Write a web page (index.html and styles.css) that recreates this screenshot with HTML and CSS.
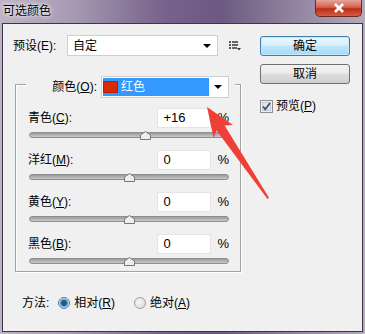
FILE: index.html
```html
<!DOCTYPE html>
<html lang="zh-CN">
<head>
  <meta charset="UTF-8">
  <title>可选颜色</title>
  <link rel="stylesheet" href="styles.css">
</head>
<body>
  <div class="window">
    <div class="titlebar">
      <span class="title">可选颜色</span>
      <div class="close">
        <svg width="14" height="10" viewBox="0 0 14 10"><path d="M3 1 L11 9 M11 1 L3 9" stroke="#fff" stroke-width="2.6"/></svg>
      </div>
    </div>

    <div class="client">
      <div class="main">
        <div class="preset-row">
          <label class="preset-label">预设(E):</label>
          <div class="select preset-select"><span>自定</span><span class="caret"></span></div>
          <svg class="list-icon" width="12" height="10" viewBox="0 0 12 10">
            <rect x="0" y="0" width="2" height="2" fill="#555"/>
            <rect x="3" y="0" width="6" height="2" fill="#666"/>
            <rect x="0" y="3" width="2" height="2" fill="#555"/>
            <rect x="3" y="3" width="6" height="2" fill="#666"/>
            <rect x="0" y="6" width="2" height="2" fill="#555"/>
            <rect x="3" y="6" width="5" height="2" fill="#666"/>
            <path d="M8 7 L12 7 L10 9.5 Z" fill="#333"/>
          </svg>
        </div>

        <div class="group">
          <div class="legend">
            <label>颜色(<u>O</u>):</label>
            <div class="select color-select">
              <div class="color-value"><span class="swatch"></span>红色</div>
              <div class="caret-box"><span class="caret"></span></div>
            </div>
          </div>

          <div class="channel">
            <div class="row"><label>青色(<u>C</u>):</label><div class="num">+16</div><span class="pct">%</span></div>
            <div class="slider"><div class="track"></div><svg class="thumb" style="left:58%" width="11" height="9" viewBox="0 0 11 9"><path d="M5.5 0.5 L10.5 4 L10.5 8.5 L0.5 8.5 L0.5 4 Z" fill="#eee" stroke="#777"/></svg></div>
          </div>
          <div class="channel">
            <div class="row"><label>洋红(<u>M</u>):</label><div class="num">0</div><span class="pct">%</span></div>
            <div class="slider"><div class="track"></div><svg class="thumb" style="left:50%" width="11" height="9" viewBox="0 0 11 9"><path d="M5.5 0.5 L10.5 4 L10.5 8.5 L0.5 8.5 L0.5 4 Z" fill="#eee" stroke="#777"/></svg></div>
          </div>
          <div class="channel">
            <div class="row"><label>黄色(<u>Y</u>):</label><div class="num">0</div><span class="pct">%</span></div>
            <div class="slider"><div class="track"></div><svg class="thumb" style="left:50%" width="11" height="9" viewBox="0 0 11 9"><path d="M5.5 0.5 L10.5 4 L10.5 8.5 L0.5 8.5 L0.5 4 Z" fill="#eee" stroke="#777"/></svg></div>
          </div>
          <div class="channel">
            <div class="row"><label>黑色(<u>B</u>):</label><div class="num">0</div><span class="pct">%</span></div>
            <div class="slider"><div class="track"></div><svg class="thumb" style="left:50%" width="11" height="9" viewBox="0 0 11 9"><path d="M5.5 0.5 L10.5 4 L10.5 8.5 L0.5 8.5 L0.5 4 Z" fill="#eee" stroke="#777"/></svg></div>
          </div>
        </div>

        <div class="method">
          <span>方法:</span>
          <label class="radio first"><span class="dot on"></span><span>相对(<u>R</u>)</span></label>
          <label class="radio"><span class="dot"></span><span>绝对(<u>A</u>)</span></label>
        </div>
      </div>

      <div class="side">
        <button class="btn default">确定</button>
        <button class="btn">取消</button>
        <label class="check">
          <svg width="13" height="13" viewBox="0 0 13 13">
            <rect x="0.5" y="0.5" width="12" height="12" fill="#e9eef3" stroke="#8e8f8f"/>
            <rect x="2.5" y="2.5" width="8" height="8" fill="#dfe6ee" stroke="#c4ccd6"/>
            <path d="M3 6.5 L5.3 9.3 L10 3" fill="none" stroke="#3b4f6e" stroke-width="1.7"/>
          </svg>
          <span>预览(<u>P</u>)</span>
        </label>
      </div>
    </div>

    <svg class="arrow" width="365" height="334" viewBox="0 0 365 334">
      <polygon points="207,107 233,125 224.6,125.5 269,197.8 267.5,199 216.6,130.6 213.6,138" fill="#ee4036"/>
    </svg>
  </div>
</body>
</html>
```

FILE: styles.css
```css
body {
  margin: 0;
  width: 365px;
  height: 334px;
  overflow: hidden;
  background: linear-gradient(90deg, #bdb4c5 0%, #a799b2 20%, #76628a 45%, #6c5880 60%, #8d7e9b 78%, #b3aabd 100%);
  font: 12px/16px "Liberation Sans", "Noto Sans CJK SC", sans-serif;
  color: #000;
}

.window {
  position: relative;
  height: 334px;
  display: flex;
  flex-direction: column;
}

.titlebar {
  height: 23px;
  display: flex;
  align-items: flex-start;
}

.title {
  padding: 4px 0 0 3px;
  line-height: 15px;
  text-shadow: 0 0 6px #fff, 0 0 3px #fff;
}

.close {
  margin-left: auto;
  margin-right: 3px;
  width: 47px;
  height: 17px;
  box-sizing: border-box;
  border: 1px solid #6d2a25;
  border-top: none;
  border-radius: 0 0 5px 5px;
  background: linear-gradient(#e6a597, #d0624f 45%, #bd2c17 55%, #d45c3f);
  display: flex;
  align-items: center;
  justify-content: center;
}

.client {
  flex: 1;
  margin: 0 2px 2px 2px;
  border: 1px solid #3e3646;
  background: #f0f0f0;
  display: flex;
}

.main {
  width: 242px;
}

.side {
  width: 90px;
  padding: 12px 0 0 15px;
  display: flex;
  flex-direction: column;
}

/* preset row */
.preset-row {
  display: flex;
  align-items: center;
  height: 21px;
  margin-top: 11px;
  padding-left: 10px;
}

.preset-label {
  width: 54px;
}

.select {
  box-sizing: border-box;
  background: #fff;
  border: 1px solid #cfcfcf;
  display: flex;
  align-items: center;
}

.preset-select {
  width: 151px;
  height: 21px;
  padding: 0 6px 0 5px;
  justify-content: space-between;
}

.caret {
  width: 0;
  height: 0;
  border-left: 4px solid transparent;
  border-right: 4px solid transparent;
  border-top: 4px solid #000;
}

.list-icon {
  margin-left: 11px;
}

/* group box */
.group {
  margin: 28px 0 0 12px;
  width: 226px;
  box-sizing: border-box;
  border: 1px solid #a3a3a3;
  padding-bottom: 5px;
  box-shadow: 1px 1px 0 #fff, inset 1px 1px 0 #fff;
}

.legend {
  margin: -9px 0 0 10px;
  width: 209px;
  height: 22px;
  box-sizing: border-box;
  padding-right: 6px;
  background: #f0f0f0;
  display: flex;
  align-items: center;
  justify-content: flex-end;
  gap: 4px;
}

.color-select {
  width: 128px;
  height: 22px;
  padding: 1px;
  align-items: stretch;
}

.color-value {
  flex: 1;
  background: #3399ff;
  color: #fff;
  display: flex;
  align-items: center;
}

.swatch {
  width: 13px;
  height: 10px;
  margin: 0 4px 0 1px;
  background: #d92a04;
  box-shadow: 0 0 0 1px #b02000;
}

.caret-box {
  width: 18px;
  display: flex;
  align-items: center;
  justify-content: center;
}

.channel {
  margin-top: 10px;
}

.row {
  display: flex;
  align-items: center;
  height: 20px;
  padding: 0 11px 0 12px;
}

.num {
  margin-left: auto;
  width: 54px;
  height: 20px;
  box-sizing: border-box;
  padding-left: 5px;
  background: #fff;
  border: 1px solid #e4e4e4;
  line-height: 18px;
  font-size: 13px;
}

.pct {
  margin-left: 6px;
  font-size: 13px;
}

.slider {
  position: relative;
  margin-left: 13px;
  width: 200px;
  height: 12px;
}

.track {
  position: relative;
  top: 4px;
  height: 4px;
  border-radius: 3px;
  border: 1px solid #8e8e8e;
  background: linear-gradient(#9a9a9a, #c8c8c8);
}

.thumb {
  position: absolute;
  top: 3px;
  margin-left: -5px;
}

/* method row */
.method {
  display: flex;
  align-items: center;
  height: 20px;
  margin-top: 21px;
  padding-left: 19px;
}

.radio {
  display: flex;
  align-items: center;
  gap: 4px;
  margin-left: 19px;
}

.radio.first {
  margin-left: 9px;
}

.dot {
  width: 12px;
  height: 12px;
  box-sizing: border-box;
  border-radius: 50%;
  border: 1px solid #a0a0a0;
  background: radial-gradient(circle at 40% 40%, #f6f6f6, #d5d5d5);
}

.dot.on {
  border-color: #4c7ea3;
  background: radial-gradient(circle, #1f5b86 0 2.5px, #5fa2cc 3.5px, #dcecf7 5px);
}

/* side buttons */
.btn {
  width: 90px;
  height: 20px;
  padding: 0;
  font: inherit;
  color: #000;
  border: 1px solid #707070;
  border-radius: 3px;
  background: linear-gradient(#f2f2f2 0, #ebebeb 45%, #dddddd 50%, #cfcfcf 100%);
}

.btn + .btn {
  margin-top: 8px;
}

.btn.default {
  border-color: #3c7fb1;
  background: linear-gradient(#eaf6fd 0, #d9f0fc 45%, #bee6fd 50%, #a7d9f5 100%);
  box-shadow: inset 0 0 0 1px #c6e8f8;
}

.check {
  margin-top: 14px;
  display: flex;
  align-items: center;
  gap: 3px;
}

.arrow {
  position: absolute;
  top: 0;
  left: 0;
  pointer-events: none;
}
```
